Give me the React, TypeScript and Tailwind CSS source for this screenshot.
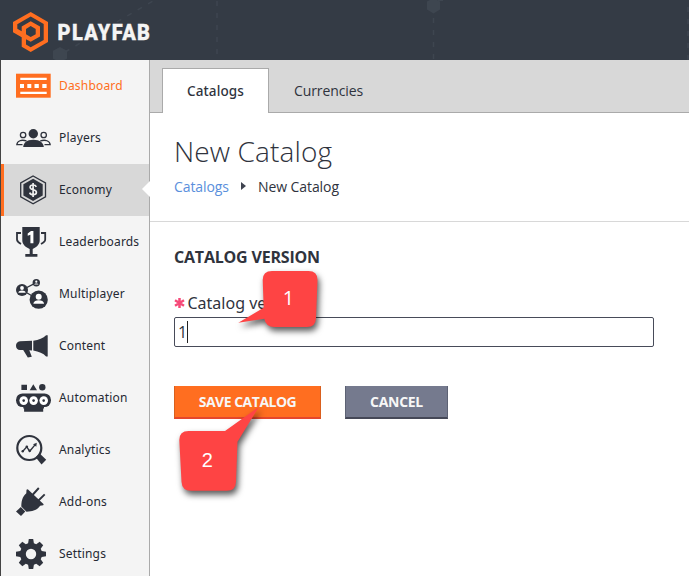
import type { ReactNode } from "react";

const ink = "#2f333d";

const icons: Record<string, ReactNode> = {
  Dashboard: (
    <g>
      <rect x="1" y="5.7" width="34.7" height="24" fill="#ff6e20" />
      <path fill="#fff" d="M5.3 9.8h26.4v2.2H5.3zM5.3 23.8h26.4V26H5.3zM5 16h4v4H5zM12.3 16h4v4h-4zM19.5 16h4.3v4h-4.3zM27.3 16h4.3v4h-4.3z" />
    </g>
  ),
  Players: (
    <g>
      <circle cx="18.3" cy="13.8" r="4.7" />
      <path d="M8.2 27c.3-4 3.2-7.2 10.1-7.2S28.4 23 28.8 27z" />
      <g fill="none" stroke={ink} strokeWidth="1.3">
        <circle cx="8.1" cy="15" r="2.7" />
        <circle cx="28.7" cy="15" r="2.7" />
        <path d="M11.500 20.900C6.500 19.300 2.200 20.800 1.800 24.700H7.500M25.300 20.900c5-1.600 9.500-.1 9.900 3.800h-5.700" />
      </g>
    </g>
  ),
  Economy: (
    <g>
      <path d="M18.100 4 30.500 11v13.800l-12.400 7-12.400-7V11z" fill="none" stroke={ink} strokeWidth="1.300" />
      <path d="M18.100 6.700 27.700 12.200v11.200l-9.600 5.500-9.700-5.500V12.200z" />
      <path d="M21.300 14.900c-.5-1.300-1.600-1.900-3.200-1.900-1.900 0-3 .9-3 2.300 0 3.300 6.300 1.600 6.300 5 0 1.500-1.200 2.400-3.200 2.400-1.800 0-3-.7-3.500-2.100M18.100 10.900v14" fill="none" stroke="#eee" strokeWidth="1.700" />
    </g>
  ),
  Leaderboards: (
    <g>
      <path d="M7.300 3h17.400v13.500c0 4.200-3.500 6.800-7 8.500v5h4.700v2.700H10.300V30h4.400v-5c-3.700-1.700-7.400-4.300-7.400-8.500z" />
      <path d="M6 9H2v6.500c0 2 1.700 3.300 4 4.500M26 9h4.200v6.500c0 2-1.900 3.300-4.200 4.500" fill="none" stroke={ink} strokeWidth="1.800" />
      <path d="M12.700 9.500 16 7h2.400v12.300h-3V10.700l-2.700 1.100z" fill="#fff" />
    </g>
  ),
  Multiplayer: (
    <g>
      <path d="M7 14 21.300 6.700M7 14l16.700 9.700" stroke={ink} strokeWidth="1.300" />
      <circle cx="21.300" cy="6.700" r="3.700" />
      <circle cx="7" cy="14" r="6" />
      <circle cx="23.700" cy="23.700" r="9.100" />
      <g fill="#fff">
        <circle cx="21.300" cy="5.700" r="1.100" />
        <path d="M19.100 8.500c.3-1.500 4.100-1.500 4.400 0z" />
        <circle cx="7" cy="12" r="1.900" />
        <path d="M3.300 16.700c.3-3 7.100-3 7.400 0z" />
        <circle cx="23.700" cy="20.700" r="3" />
        <path d="M18.300 27.700c.4-4.500 10.400-4.500 10.800 0z" />
      </g>
    </g>
  ),
  Content: (
    <path d="M17 12.700v9.800l-2.700-.2 2.500 6.500-4 .7-4.600-7.500H5C2.500 22 1 20 1 17.700s1.500-4.200 4-4.400zM18.300 12.700c5.500-.7 10-2.400 12.800-5.400h1.600v21.200h-1.600c-2.800-3-7.300-5-12.800-5.900z" />
  ),
  Automation: (
    <g>
      <path d="M6.400 4.700H12V10H6.400zM18.300 4.300 22 10.300h-7.300z" />
      <circle cx="27.300" cy="7.300" r="3.200" />
      <rect x="1" y="13.400" width="35" height="13.700" rx="6.500" />
      <path d="M8.300 26H29v2.500h-.8v3.200H9.100v-3.200h-.8z" />
      {[8.7, 18.6, 28.7].map((x) => (
        <g key={x}>
          <circle cx={x} cy="20.600" r="4.300" fill="#fff" />
          <circle cx={x} cy="20.600" r="1.300" />
        </g>
      ))}
    </g>
  ),
  Analytics: (
    <g>
      <circle cx="14.300" cy="16" r="12" fill="none" stroke={ink} strokeWidth="2.200" />
      <path d="m20.700 25.200 4-3.800 6.500 6.300-4.700 4.700z" />
      <path d="m7.600 19.500 4.200-4.700 2.900 4.500 5.500-6.700" fill="none" stroke={ink} strokeWidth="1.400" />
      <circle cx="7.700" cy="19.300" r="1.200" /><circle cx="11.800" cy="14.800" r="1.300" /><circle cx="14.700" cy="18.700" r="1.300" />
      <path d="m18 12.300 3.800-1.500-.5 4z" />
    </g>
  ),
  "Add-ons": (
    <g>
      <path d="m12.800 5.300 15.900 15-.5 1-3 .5c-3 4-6 5.400-13.700 6l-5.200-5.200c.2-5.200.7-9.300 5-13.300l.2-3.500z" />
      <path d="m17.500 11 6.300-7M23 17l6.700-6.700" stroke={ink} strokeWidth="1.900" />
      <path d="m1 27.600 4.800-4.500 4.500 4.300L6 32z" />
    </g>
  ),
  Settings: (
    <path fillRule="evenodd" d="m13.800 3h4.400l.7 4.200 2.300 1 3.500-2.500 3.500 3.500-2.500 3.500 1 2.300 4.300.7v4.600l-4.300.7-1 2.300 2.500 3.500-3.500 3.500-3.500-2.500-2.300 1-.7 4.200h-4.400l-.7-4.200-2.300-1-3.500 2.500-3.500-3.500 2.500-3.500-1-2.300-4.300-.7v-4.600l4.300-.7 1-2.300-2.500-3.500 3.500-3.500 3.500 2.500 2.300-1zM16 12.800a5.200 5.200 0 1 0 0 10.400 5.200 5.200 0 0 0 0-10.400z" />
  ),
};

function NavItem({ name }: { name: string }) {
  const active = name === "Economy";
  return (
    <a
      className={`flex h-[52px] shrink-0 items-center gap-2 border-l-[3px] pl-[11px] ${
        active ? "border-[#ff6e20] bg-[#d8d8d8]" : "border-transparent"
      }`}
    >
      <svg className="size-9 shrink-0" viewBox="0 0 36 36" fill={ink}>{icons[name]}</svg>
      <span className={`pb-px text-[12px] tracking-[0.18px] whitespace-nowrap ${name === "Dashboard" ? "text-[#ff6e20]" : "text-[#252933]"}`}>{name}</span>
    </a>
  );
}

function Header() {
  return (
    <header className="relative h-[60px] shrink-0 bg-[#343b45]">
      <svg className="absolute inset-0" width="689" height="60">
        <g fill="#3e4650">
          <path d="m60 47 7 3.700v8L60 62l-7-3.300v-8zM433.500-2l6.500 3.500v8l-6.500 4-6.500-4v-8z" />
          <path d="M438 0h5v1h-5z" />
        </g>
        <g stroke="#3e4650" strokeWidth="1.500" strokeDasharray="5 7">
          <path d="M65 52 153 1M217 1v59M433.500 18v42M688 7v53" />
        </g>
        <path
          fill="#ff6e20"
          fillRule="evenodd"
          d="M30.700 12 48 22v20L30.700 52l-9-5.200v-9.500L13 32.300V22zM30.700 16.500 17.300 24.200v4.500l4.400 2.500v-4.600l9-5.300 9.300 5.300v9.800l-9.300 5.400-4.700-2.500v5.200l4.700 2.800L43.700 40V24zM30.700 26l-4.700 2.900v5.300l4.700 2.700 5-2.700v-5.300z"
        />
        <g transform="translate(57.500 40.300) scale(.89 1)">
          <text textLength="104" lengthAdjust="spacing" strokeWidth="0.3" className="fill-[#f4f4f4] stroke-[#f4f4f4] font-['Roboto',sans-serif] text-[22.5px] font-black">PLAYFAB</text>
        </g>
      </svg>
    </header>
  );
}

export default function App() {
  return (
    <div className="relative flex h-[576px] w-[689px] flex-col overflow-hidden bg-white font-['Noto_Sans',sans-serif] text-[#2f333d]">
      <Header />
      <div className="flex min-h-0 flex-1">
        <nav className="relative flex w-[150px] shrink-0 flex-col border-r border-l border-r-[#aaa] border-l-[#444] bg-[#f4f4f4]">
          {Object.keys(icons).map((name) => <NavItem key={name} name={name} />)}
          <svg className="absolute top-[121px] -right-px" width="8" height="16"><path d="M8 0v16L0 8z" fill="#fff" /></svg>
        </nav>
        <main className="flex min-w-0 flex-1 flex-col">
          <div className="flex h-[53px] shrink-0 border-b border-[#aaa] bg-[#d8d8d8] pt-2 pl-3 text-[13.5px]">
            <div className="-mb-px flex w-[107px] items-center justify-center border border-b-0 border-[#aaa] bg-white font-medium tracking-[0.1px]">Catalogs</div>
            <div className="flex items-center pl-[25px] font-['Open_Sans',sans-serif] text-[14px] tracking-[-0.1px]">Currencies</div>
          </div>
          <section className="h-[109px] shrink-0 border-b border-[#d8d8d8] pt-[19px] pl-6 font-['Open_Sans',sans-serif]">
            <h1 className="h-10 text-[28px] leading-[38px] font-light tracking-[0.12px]">New Catalog</h1>
            <div className="flex h-7 items-center text-[14px] tracking-[-0.08px]">
              <span className="text-[#5a8fdc]">Catalogs</span>
              <svg className="mr-3 ml-3" width="5" height="8"><path d="M0 0v8l5-4z" fill="#3f4350" /></svg>
              <span>New Catalog</span>
            </div>
          </section>
          <section className="flex flex-col pt-[25px] pl-6">
            <h2 className="h-[20px] font-['Open_Sans',sans-serif] text-[16px] leading-5 font-bold tracking-[-0.2px] whitespace-nowrap">CATALOG VERSION</h2>
            <label className="mt-[26px] flex h-5 items-center text-[16px] whitespace-nowrap">
              <svg className="mr-[2.500px]" width="11" height="10" viewBox="0 0 11 10"><path d="M5.500 0v10M1 2.300l9 5.400M10 2.300 1 7.700" stroke="#f64a79" strokeWidth="2.500" /></svg>
              Catalog version
            </label>
            <div className="mt-1 flex h-[30px] w-[480px] items-center rounded-[2px] border border-[#474b59] pl-[3px] font-['Open_Sans',sans-serif] text-[16px]">
              1<span className="h-[22px] w-px bg-[#222]" />
            </div>
            <div className="mt-[39px] flex gap-6 font-['Open_Sans',sans-serif] text-[14px] font-bold tracking-[-0.5px] text-[#f7f7f7]">
              <button className="h-[33px] w-[147px] border-x border-b-2 border-x-[#d9601e] border-b-[#e5472c] bg-[#ff6e20]">SAVE CATALOG</button>
              <button className="h-[33px] w-[103px] border-x border-b-2 border-x-[#5d6274] border-b-[#454857] bg-[#757a8e] tracking-[-0.3px]">CANCEL</button>
            </div>
          </section>
        </main>
      </div>
      <svg className="absolute inset-0" width="689" height="576">
        <g fill="#fe4444" className="drop-shadow-[2px_4px_3px_rgba(0,0,0,0.65)]">
          <path d="M272 271h36.500q9 0 9 9l-1.500 38q-.3 9-9 9h-33q-8 0-9.700-8.300l-26 4 25.400-15-1-27.700q0-9 9.300-9z" />
          <path d="M188.500 431H225l34-24.300-21.500 35-1.500 40q-.3 9-9 9h-36q-9 0-9.500-9l-2.200-41.700q0-9 9.200-9z" />
        </g>
        <g fill="#fff" textAnchor="middle" className="font-['Liberation_Sans',sans-serif] text-[20px]">
          <text x="288.500" y="305.300" className="font-['Open_Sans',sans-serif]">1</text>
          <text x="207.300" y="467">2</text>
        </g>
      </svg>
    </div>
  );
}
